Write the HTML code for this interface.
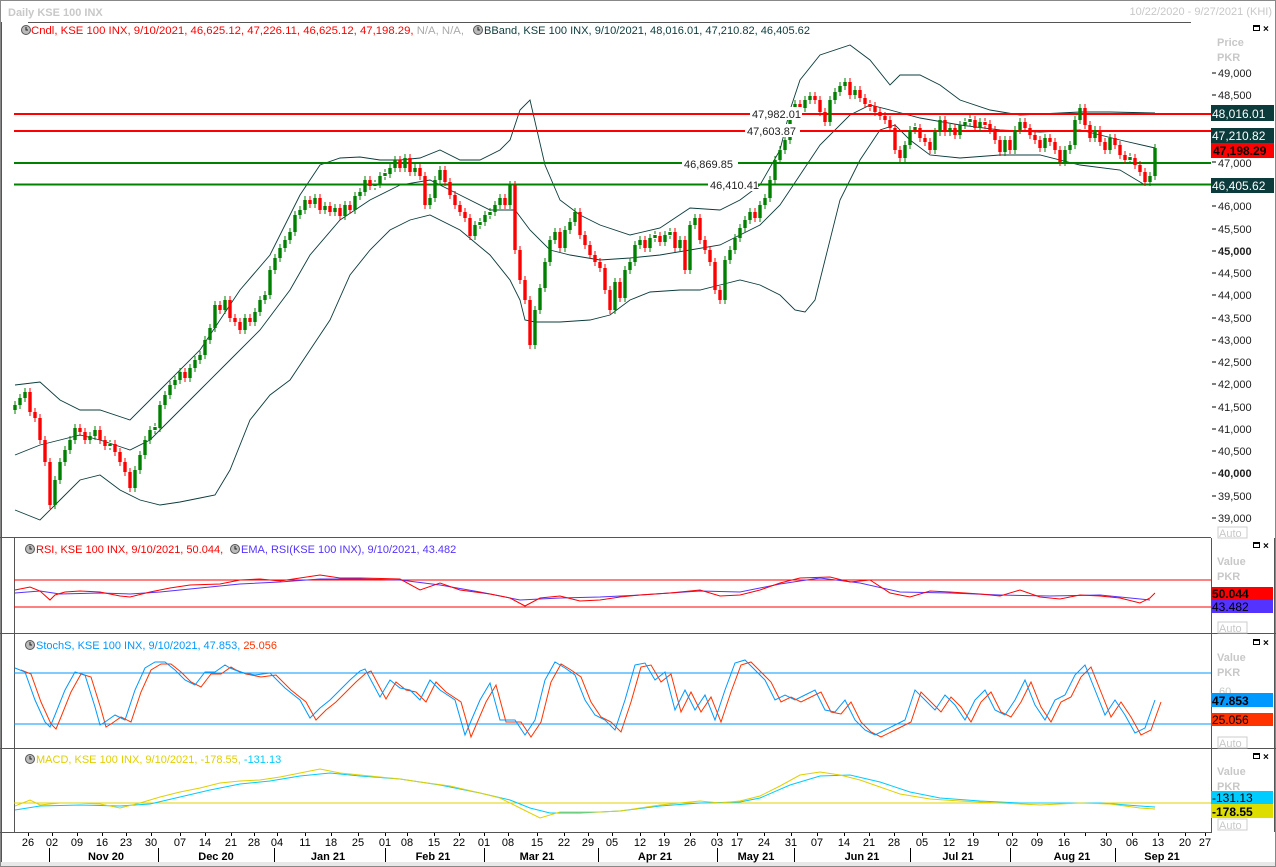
<!DOCTYPE html>
<html><head><meta charset="utf-8"><style>
html,body{margin:0;padding:0;background:#fff;width:1276px;height:867px;overflow:hidden}
svg{display:block;font-family:"Liberation Sans","DejaVu Sans",sans-serif}
</style></head><body>
<svg width="1276" height="867" viewBox="0 0 1276 867" xmlns="http://www.w3.org/2000/svg" xmlns:xlink="http://www.w3.org/1999/xlink">
<defs>
<path id="gp" d="M15 410V405M20 405V398M25 398V392M55 505V480M60 480V462M65 462V450M70 450V440M75 440V428M90 440V436M95 436V430M110 446V444M135 488V470M140 470V455M145 455V440M150 440V430M155 430V427M160 428V405M165 405V395M170 395V385M175 385V380M180 380V372M190 378V368M195 368V360M200 360V355M205 355V340M210 340V328M215 328V305M225 310V300M245 330V318M255 322V312M260 312V300M265 300V295M270 295V270M275 270V258M280 258V248M285 248V240M290 240V232M295 232V215M300 215V210M305 210V200M315 204V198M325 210V206M335 212V208M345 216V205M355 210V196M360 196V192M365 192V180M375 186V184M380 184V176M385 176V173M390 174V168M395 168V160M405 168V158M415 172V168M430 205V198M435 198V180M440 180V170M475 236V225M480 225V222M485 222V215M490 215V212M495 212V205M500 205V198M510 205V185M535 345V310M540 310V288M545 288V262M550 262V240M555 240V232M565 248V230M570 230V222M575 222V212M615 310V282M625 298V270M630 270V262M635 262V245M640 245V240M650 248V238M655 238V235M665 242V235M670 235V232M680 248V240M690 270V225M695 225V218M725 300V260M730 260V250M735 250V238M740 238V228M745 228V220M750 220V212M760 218V205M765 205V198M770 198V180M775 180V160M780 160V150M785 150V140M790 140V115M795 115V104M805 108V100M810 100V96M830 122V100M835 100V92M840 92V86M845 86V82M855 95V90M905 158V145M910 145V130M915 130V127M935 150V132M940 132V120M950 132V128M960 135V125M965 125V122M970 122V119M980 128V122M1005 152V140M1015 150V130M1020 130V122M1045 148V138M1065 162V150M1070 150V145M1075 145V120M1080 120V108M1095 138V130M1110 150V138M1130 160V157M1150 182V176M1155 176V148"/>
<path id="rp" d="M30 392V412M35 412V418M40 418V440M45 440V462M50 462V505M80 428V432M85 432V440M100 430V440M105 440V446M115 444V452M120 452V462M125 462V472M130 472V488M185 372V378M220 305V310M230 300V318M235 318V322M240 322V330M250 318V322M310 200V204M320 198V210M330 206V212M340 208V216M350 205V210M370 180V186M400 160V168M410 158V172M420 168V176M425 176V205M445 170V182M450 182V195M455 195V205M460 205V212M465 212V218M470 218V236M505 198V205M515 185V250M520 250V280M525 280V300M530 300V345M560 232V248M580 212V235M585 235V245M590 245V255M595 255V262M600 262V268M605 268V290M610 290V310M620 282V298M645 240V248M660 236V242M675 232V248M685 240V270M700 218V240M705 240V250M710 250V262M715 262V290M720 290V300M755 212V218M800 104V108M815 96V100M820 100V112M825 112V122M850 82V95M860 90V98M865 98V104M870 104V107M875 106V112M880 112V116M885 116V120M890 120V128M895 128V150M900 150V158M920 128V138M925 138V142M930 142V150M945 120V132M955 128V135M975 120V128M985 122V125M990 124V130M995 130V140M1000 140V152M1010 140V150M1025 122V128M1030 128V135M1035 135V140M1040 140V148M1050 138V142M1055 142V150M1060 150V162M1085 108V125M1090 125V138M1100 130V142M1105 142V150M1115 138V145M1120 145V155M1125 155V160M1135 158V165M1140 165V172M1145 172V182"/>
<path id="st" d="M15 668L25 672L35 700L45 722L50 727L55 715L65 690L75 672L85 675L95 707L100 725L105 722L115 715L125 720L135 690L145 668L155 662L165 662L175 670L185 680L195 685L205 672L215 672L225 665L230 668L240 672L255 675L270 673L285 688L300 700L310 718L320 708L330 700L340 690L350 680L360 671L365 669L380 697L390 680L400 688L410 690L420 700L430 680L440 690L455 700L465 735L480 700L490 683L500 720L515 720L525 735L535 720L545 680L555 662L565 668L575 675L585 700L595 715L605 720L615 730L625 700L635 665L645 663L655 680L665 672L675 710L685 690L695 710L705 695L715 720L725 690L735 663L745 660L755 670L765 680L775 700L785 695L795 700L805 695L815 690L825 710L835 712L845 700L855 720L865 730L875 735L885 730L895 725L905 720L915 690L925 700L935 710L945 695L955 705L965 720L975 700L985 690L995 710L1005 715L1015 700L1025 680L1035 705L1045 720L1055 700L1065 695L1075 675L1085 665L1095 690L1105 715L1115 700L1125 715L1135 733L1145 728L1155 700"/>
</defs>
<rect x="0" y="0" width="1276" height="867" fill="#fff"/>
<rect x="0" y="862" width="1276" height="5" fill="#e8e8e8"/>
<rect x="0.5" y="0.5" width="1275" height="866" fill="none" stroke="#888"/>
<text x="8" y="16" font-size="11" fill="#c8c8c8" font-weight="bold">Daily KSE 100 INX</text>
<text x="1272" y="15" font-size="11" fill="#c8c8c8" text-anchor="end">10/22/2020 - 9/27/2021 (KHI)</text>
<line x1="28" y1="22.5" x2="1191" y2="22.5" stroke="#555"/>
<g stroke="#555" stroke-width="1">
<line x1="0" y1="537.5" x2="1211" y2="537.5"/>
<line x1="0" y1="633.5" x2="1276" y2="633.5"/>
<line x1="0" y1="748.5" x2="1276" y2="748.5"/>
<line x1="0" y1="832.5" x2="1211" y2="832.5"/>
<line x1="14.5" y1="538" x2="14.5" y2="832"/>
<line x1="1211.5" y1="538" x2="1211.5" y2="833"/>
<line x1="1.5" y1="22" x2="1.5" y2="862"/>
<line x1="1274.5" y1="538" x2="1274.5" y2="832"/>
</g>
<!-- bollinger -->
<g fill="none" stroke="#0b3b3b" stroke-width="0.9">
<path d="M15 385L40 382L60 400L80 410L100 410L130 420L160 390L200 350L240 290L270 255L300 195L320 165L340 158L360 157L380 160L400 160L420 158L440 150L460 160L480 160L500 150L510 140L520 110L530 100L545 165L560 200L580 215L600 225L630 235L660 228L690 208L720 210L740 200L760 185L780 150L790 110L800 80L820 55L850 45L870 60L890 85L900 75L920 75L940 85L960 100L990 110L1020 115L1060 113L1080 112L1110 112L1155 113"/>
<path d="M15 455L40 445L60 440L80 435L100 440L130 450L150 440L170 420L200 390L230 360L260 330L290 290L310 255L340 220L370 200L400 185L430 180L460 195L490 210L515 210L530 230L550 250L570 255L600 260L630 258L660 255L690 250L720 245L740 235L760 225L780 205L800 175L820 145L850 115L870 105L890 110L920 118L960 125L1000 130L1040 132L1080 130L1120 140L1155 148"/>
<path d="M15 510L40 520L60 500L80 480L100 475L120 490L140 500L160 505L180 502L200 498L215 495L230 470L250 420L270 395L290 380L310 350L330 320L350 275L370 250L390 230L410 220L430 215L460 230L490 255L510 280L520 300L525 320L535 322L560 322L590 320L610 315L630 300L650 292L680 290L700 290L720 285L740 280L760 285L780 295L795 310L805 312L815 300L825 260L840 200L860 160L880 130L895 125L910 140L930 155L960 158L1000 155L1040 155L1080 165L1120 170L1145 185L1155 185"/>
</g>
<line x1="14" y1="114" x2="1211" y2="114" stroke="#f00" stroke-width="2"/>
<line x1="14" y1="131" x2="1211" y2="131" stroke="#f00" stroke-width="2"/>
<line x1="14" y1="163" x2="1211" y2="163" stroke="#008000" stroke-width="2"/>
<line x1="14" y1="184.5" x2="1211" y2="184.5" stroke="#008000" stroke-width="2"/>
<!-- candles -->
<g stroke="#008000" fill="none">
<use xlink:href="#gp" stroke-width="3.4"/>
<use xlink:href="#gp" stroke-width="1" transform="translate(0,-4)"/>
<use xlink:href="#gp" stroke-width="1" transform="translate(0,4)"/>
</g>
<g stroke="#ff0000" fill="none">
<use xlink:href="#rp" stroke-width="3.4"/>
<use xlink:href="#rp" stroke-width="1" transform="translate(0,-4)"/>
<use xlink:href="#rp" stroke-width="1" transform="translate(0,4)"/>
</g>
<g font-size="11" fill="#222">
<rect x="750" y="107" width="52" height="13" fill="#fff"/><text x="752" y="118">47,982.01</text>
<rect x="745" y="124" width="55" height="13" fill="#fff"/><text x="747" y="135">47,603.87</text>
<rect x="682" y="157" width="56" height="13" fill="#fff"/><text x="684" y="168">46,869.85</text>
<rect x="708" y="178" width="50" height="13" fill="#fff"/><text x="710" y="189">46,410.41</text>
</g>
<!-- RSI -->
<line x1="14" y1="580" x2="1211" y2="580" stroke="#f00"/>
<line x1="14" y1="607" x2="1211" y2="607" stroke="#f00"/>
<path fill="none" stroke="#5533ff" d="M15 593L40 591L60 594L100 593L130 594L160 592L200 588L240 584L280 582L320 579L360 579L400 580L440 585L480 592L520 600L560 598L600 597L640 595L700 591L740 592L780 584L820 578L860 583L900 592L950 593L1000 595L1050 596L1100 595L1150 600"/>
<path fill="none" stroke="#f00" d="M15 590L30 587L40 591L50 600L55 595L65 592L80 591L100 592L120 596L130 597L150 592L170 588L190 585L220 584L240 580L260 579L280 581L300 578L320 575L340 578L360 578L400 579L420 590L440 583L460 590L490 594L510 598L525 606L540 598L560 596L580 601L600 600L620 597L640 595L670 593L700 590L720 596L740 595L760 590L780 583L800 578L830 577L850 582L870 580L890 593L910 597L930 591L950 592L980 594L1000 596L1020 590L1040 597L1060 599L1080 595L1100 596L1120 598L1140 603L1150 598L1155 593"/>
<!-- Stoch -->
<line x1="14" y1="673" x2="1211" y2="673" stroke="#0099ff"/>
<line x1="14" y1="724" x2="1211" y2="724" stroke="#0099ff"/>
<use xlink:href="#st" fill="none" stroke="#ff3300" transform="translate(6,2)"/>
<use xlink:href="#st" fill="none" stroke="#0099ff"/>
<!-- MACD -->
<line x1="14" y1="803" x2="1211" y2="803" stroke="#e0d000"/>
<path fill="none" stroke="#00ccff" d="M15 810L40 806L80 805L120 806L150 804L180 797L210 790L240 784L270 781L300 776L330 773L360 776L400 779L440 785L480 793L510 800L530 808L550 813L580 813L620 811L660 806L700 803L740 802L760 798L790 785L820 776L850 775L880 782L910 792L940 798L980 801L1020 803L1060 803L1100 803L1140 806L1155 807"/>
<path fill="none" stroke="#e0d000" d="M15 806L30 800L40 805L60 803L80 803L100 804L120 808L140 803L160 797L180 792L200 788L220 783L240 781L260 780L280 777L300 773L320 769L340 773L360 775L380 777L400 779L420 782L450 786L480 793L500 798L520 808L540 818L560 812L580 812L600 812L620 811L640 808L660 805L680 803L700 801L720 803L740 801L760 796L780 786L800 775L820 772L840 775L860 780L880 787L900 794L930 799L960 801L1000 803L1040 805L1080 803L1110 804L1140 808L1155 809"/>
<!-- legends -->
<g font-size="11">
<circle cx="26" cy="30" r="4.5" fill="#bbb" stroke="#555"/><path d="M26 27v3h2" stroke="#222" fill="none"/>
<text x="31" y="34" fill="#f00" textLength="433" lengthAdjust="spacingAndGlyphs">Cndl, KSE 100 INX, 9/10/2021, 46,625.12, 47,226.11, 46,625.12, 47,198.29, <tspan fill="#aaa">N/A, N/A,</tspan></text>
<circle cx="478" cy="30" r="4.5" fill="#bbb" stroke="#555"/><path d="M478 27v3h2" stroke="#222" fill="none"/>
<text x="484" y="34" fill="#0b3b3b" textLength="326" lengthAdjust="spacingAndGlyphs">BBand, KSE 100 INX, 9/10/2021, 48,016.01, 47,210.82, 46,405.62</text>
<circle cx="30" cy="549" r="4.5" fill="#bbb" stroke="#555"/><path d="M30 546v3h2" stroke="#222" fill="none"/>
<text x="36" y="553" fill="#f00">RSI, KSE 100 INX, 9/10/2021, 50.044,</text>
<circle cx="235" cy="549" r="4.5" fill="#bbb" stroke="#555"/><path d="M235 546v3h2" stroke="#222" fill="none"/>
<text x="241" y="553" fill="#5533ff">EMA, RSI(KSE 100 INX), 9/10/2021, 43.482</text>
<circle cx="30" cy="645" r="4.5" fill="#bbb" stroke="#555"/><path d="M30 642v3h2" stroke="#222" fill="none"/>
<text x="36" y="649" fill="#0099ff">StochS, KSE 100 INX, 9/10/2021, 47.853, <tspan fill="#ff3300">25.056</tspan></text>
<circle cx="30" cy="759" r="4.5" fill="#bbb" stroke="#555"/><path d="M30 756v3h2" stroke="#222" fill="none"/>
<text x="36" y="763" fill="#e0d000">MACD, KSE 100 INX, 9/10/2021, -178.55, <tspan fill="#00ccff">-131.13</tspan></text>
</g>
<!-- right axis -->
<g font-size="11" fill="#c8c8c8" font-weight="bold">
<text x="1217" y="46">Price</text><text x="1217" y="61">PKR</text>
<text x="1217" y="565">Value</text><text x="1217" y="580">PKR</text>
<text x="1217" y="661">Value</text><text x="1217" y="676">PKR</text>
<text x="1217" y="775">Value</text><text x="1217" y="790">PKR</text>
</g>
<g font-size="11" fill="#c8c8c8">
<rect x="1218" y="527" width="29" height="11" fill="#fff" stroke="#ccc"/><text x="1219" y="537">Auto</text>
<rect x="1218" y="622" width="29" height="11" fill="#fff" stroke="#ccc"/><text x="1219" y="632">Auto</text>
<rect x="1218" y="737" width="29" height="11" fill="#fff" stroke="#ccc"/><text x="1219" y="747">Auto</text>
<rect x="1218" y="819" width="29" height="11" fill="#fff" stroke="#ccc"/><text x="1219" y="829">Auto</text>
<text x="1219" y="695">60</text>
</g>
<g stroke="#000" fill="none">
<rect x="1253.5" y="25.5" width="6" height="5"/><line x1="1253" y1="26.5" x2="1260" y2="26.5"/>
<rect x="1253.5" y="542.5" width="6" height="5"/><line x1="1253" y1="543.5" x2="1260" y2="543.5"/>
<rect x="1253.5" y="639.5" width="6" height="5"/><line x1="1253" y1="640.5" x2="1260" y2="640.5"/>
<rect x="1253.5" y="753.5" width="6" height="5"/><line x1="1253" y1="754.5" x2="1260" y2="754.5"/>
</g>
<g font-size="10" font-weight="bold" fill="#000">
<text x="1263" y="32">×</text><text x="1263" y="549">×</text><text x="1263" y="646">×</text><text x="1263" y="760">×</text>
</g>
<g stroke="#000"><path d="M1212 73h4M1212 95h4M1212 162h4M1212 206h4M1212 229h4M1212 251h4M1212 273h4M1212 295h4M1212 318h4M1212 340h4M1212 362h4M1212 384h4M1212 407h4M1212 429h4M1212 451h4M1212 473h4M1212 496h4M1212 518h4"/></g>
<g font-size="11" fill="#222">
<text x="1218" y="77">49,000</text><text x="1218" y="99">48,500</text>
<text x="1218" y="167">47,000</text>
<text x="1218" y="210">46,000</text><text x="1218" y="233">45,500</text>
<text x="1218" y="255" font-weight="bold">45,000</text><text x="1218" y="277">44,500</text>
<text x="1218" y="299">44,000</text><text x="1218" y="322">43,500</text>
<text x="1218" y="344">43,000</text><text x="1218" y="366">42,500</text>
<text x="1218" y="388">42,000</text><text x="1218" y="411">41,500</text>
<text x="1218" y="433">41,000</text><text x="1218" y="455">40,500</text>
<text x="1218" y="477" font-weight="bold">40,000</text><text x="1218" y="500">39,500</text>
<text x="1218" y="522">39,000</text>
</g>
<g font-size="12">
<rect x="1211" y="105" width="63" height="16" fill="#0b3b3b"/><text x="1212" y="118" fill="#fff">48,016.01</text>
<rect x="1211" y="128" width="63" height="15" fill="#0b3b3b"/><text x="1212" y="140" fill="#fff">47,210.82</text>
<rect x="1211" y="143" width="63" height="15" fill="#f00"/><text x="1213" y="155" fill="#000" font-weight="bold">47,198.29</text>
<rect x="1211" y="178" width="63" height="15" fill="#0b3b3b"/><text x="1212" y="190" fill="#fff">46,405.62</text>
<rect x="1211" y="587" width="62" height="13" fill="#f00"/><text x="1212" y="598" fill="#000" font-weight="bold">50.044</text>
<rect x="1211" y="600" width="62" height="13" fill="#5533ff"/><text x="1212" y="611" fill="#000">43.482</text>
<rect x="1211" y="693" width="62" height="14" fill="#0099ff"/><text x="1212" y="705" fill="#000" font-weight="bold">47.853</text>
<rect x="1211" y="713" width="62" height="13" fill="#ff3300"/><text x="1212" y="724" fill="#000">25.056</text>
<rect x="1211" y="791" width="62" height="13" fill="#00ccff"/><text x="1212" y="802" fill="#000">-131.13</text>
<rect x="1211" y="804" width="62" height="14" fill="#dddd00"/><text x="1212" y="816" fill="#000" font-weight="bold">-178.55</text>
</g>
<!-- date axis -->
<g font-size="11" fill="#000" text-anchor="middle">
<text x="28" y="846">26</text><text x="52" y="846">02</text><text x="77" y="846">09</text><text x="102" y="846">16</text><text x="126" y="846">23</text><text x="151" y="846">30</text>
<text x="180" y="846">07</text><text x="205" y="846">14</text><text x="231" y="846">21</text><text x="254" y="846">28</text>
<text x="277" y="846">04</text><text x="305" y="846">11</text><text x="331" y="846">18</text><text x="358" y="846">25</text>
<text x="385" y="846">01</text><text x="407" y="846">08</text><text x="434" y="846">15</text><text x="459" y="846">22</text>
<text x="484" y="846">01</text><text x="508" y="846">08</text><text x="537" y="846">15</text><text x="564" y="846">22</text><text x="588" y="846">29</text>
<text x="612" y="846">05</text><text x="640" y="846">12</text><text x="664" y="846">19</text><text x="690" y="846">26</text>
<text x="717" y="846">03</text><text x="737" y="846">17</text><text x="764" y="846">24</text><text x="791" y="846">31</text>
<text x="817" y="846">07</text><text x="844" y="846">14</text><text x="869" y="846">21</text><text x="894" y="846">28</text>
<text x="922" y="846">05</text><text x="949" y="846">12</text><text x="973" y="846">19</text>
<text x="1012" y="846">02</text><text x="1037" y="846">09</text><text x="1064" y="846">16</text><text x="1106" y="846">30</text>
<text x="1132" y="846">06</text><text x="1158" y="846">13</text><text x="1185" y="846">20</text><text x="1205" y="846">27</text>
</g>
<g font-size="11" font-weight="bold" fill="#000" text-anchor="middle">
<text x="106" y="860">Nov 20</text><text x="216" y="860">Dec 20</text><text x="328" y="860">Jan 21</text>
<text x="433" y="860">Feb 21</text><text x="537" y="860">Mar 21</text><text x="655" y="860">Apr 21</text>
<text x="756" y="860">May 21</text><text x="862" y="860">Jun 21</text><text x="958" y="860">Jul 21</text>
<text x="1072" y="860">Aug 21</text><text x="1162" y="860">Sep 21</text>
</g>
<g stroke="#000">
<path d="M49.5 848V862M158.5 848V862M274.5 848V862M385.5 848V862M484.5 848V862M598.5 848V862M717.5 848V862M794.5 848V862M910.5 848V862M1010.5 848V862M1115.5 848V862"/>
<path d="M28.5 833V836M52.5 833V836M77.5 833V836M102.5 833V836M126.5 833V836M151.5 833V836M180.5 833V836M205.5 833V836M231.5 833V836M254.5 833V836M277.5 833V836M305.5 833V836M331.5 833V836M358.5 833V836M385.5 833V836M407.5 833V836M434.5 833V836M459.5 833V836M484.5 833V836M508.5 833V836M537.5 833V836M564.5 833V836M588.5 833V836M612.5 833V836M640.5 833V836M664.5 833V836M690.5 833V836M717.5 833V836M737.5 833V836M764.5 833V836M791.5 833V836M817.5 833V836M844.5 833V836M869.5 833V836M894.5 833V836M922.5 833V836M949.5 833V836M973.5 833V836M998.5 833V836M1012.5 833V836M1037.5 833V836M1064.5 833V836M1085.5 833V836M1106.5 833V836M1132.5 833V836M1158.5 833V836M1185.5 833V836M1205.5 833V836"/>
</g>
</svg>
</body></html>
